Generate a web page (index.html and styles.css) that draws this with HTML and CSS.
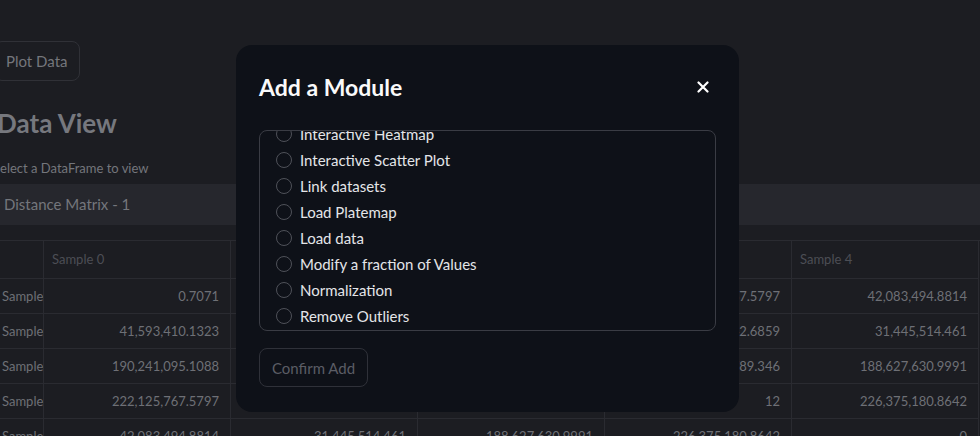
FILE: index.html
```html
<!DOCTYPE html>
<html lang="en">
<head>
    <meta charset="UTF-8">
    <meta name="viewport" content="width=device-width, initial-scale=1.0">
    <title>Data View</title>
    <link rel="stylesheet" href="styles.css">
</head>
<body>
    <div class="page">
        <button class="plot-button">Plot Data</button>
        <h1 class="page-title">Data View</h1>
        <p class="caption">Select a DataFrame to view</p>
        <div class="selectbox">Distance Matrix - 1</div>

        <div class="grid">
            <div class="cell head index"></div>
            <div class="cell head">Sample 0</div>
            <div class="cell head">Sample 1</div>
            <div class="cell head">Sample 2</div>
            <div class="cell head">Sample 3</div>
            <div class="cell head">Sample 4</div>

            <div class="cell index">Sample 0</div>
            <div class="cell num">0.7071</div>
            <div class="cell num">41,593,410.1323</div>
            <div class="cell num">190,241,095.1088</div>
            <div class="cell num">222,125,767.5797</div>
            <div class="cell num">42,083,494.8814</div>

            <div class="cell index">Sample 1</div>
            <div class="cell num">41,593,410.1323</div>
            <div class="cell num">1.4142</div>
            <div class="cell num">148,647,684.9765</div>
            <div class="cell num">180,532,342.6859</div>
            <div class="cell num">31,445,514.461</div>

            <div class="cell index">Sample 2</div>
            <div class="cell num">190,241,095.1088</div>
            <div class="cell num">148,647,684.9765</div>
            <div class="cell num">6</div>
            <div class="cell num">31,884,789.346</div>
            <div class="cell num">188,627,630.9991</div>

            <div class="cell index">Sample 3</div>
            <div class="cell num">222,125,767.5797</div>
            <div class="cell num">180,532,342.6859</div>
            <div class="cell num">31,884,789.346</div>
            <div class="cell num">12</div>
            <div class="cell num">226,375,180.8642</div>

            <div class="cell index">Sample 4</div>
            <div class="cell num">42,083,494.8814</div>
            <div class="cell num">31,445,514.461</div>
            <div class="cell num">188,627,630.9991</div>
            <div class="cell num">226,375,180.8642</div>
            <div class="cell num">0</div>
        </div>
    </div>

    <div class="modal">
        <div class="modal-header">
            <h2 class="modal-title">Add a Module</h2>
            <span class="close">
                <svg width="12" height="12" viewBox="0 0 12 12">
                    <path d="M1.5 1.5 L10.5 10.5 M10.5 1.5 L1.5 10.5" stroke="#ffffff" stroke-width="2.2" stroke-linecap="round"/>
                </svg>
            </span>
        </div>
        <div class="options">
            <div class="option-list">
                <label class="option"><span class="radio"></span>Interactive Heatmap</label>
                <label class="option"><span class="radio"></span>Interactive Scatter Plot</label>
                <label class="option"><span class="radio"></span>Link datasets</label>
                <label class="option"><span class="radio"></span>Load Platemap</label>
                <label class="option"><span class="radio"></span>Load data</label>
                <label class="option"><span class="radio"></span>Modify a fraction of Values</label>
                <label class="option"><span class="radio"></span>Normalization</label>
                <label class="option"><span class="radio"></span>Remove Outliers</label>
            </div>
        </div>
        <button class="confirm">Confirm Add</button>
    </div>
</body>
</html>
```

FILE: styles.css
```css
body {
    margin: 0;
    padding: 0;
    background-color: #1c1d22;
    font-family: Lato, "Noto Sans", sans-serif;
    overflow: hidden;
}

.page {
    margin-left: -7px;
    padding-top: 41px;
    width: 1000px;
}

.plot-button {
    display: block;
    margin-left: 1px;
    height: 40px;
    padding: 0 11px;
    background: transparent;
    border: 1px solid #303137;
    border-radius: 8px;
    color: #74767c;
    font-family: inherit;
    font-size: 15px;
}

.page-title {
    margin: 22px 0 0 4px;
    font-size: 26px;
    font-weight: 700;
    line-height: 40px;
    color: #76787e;
}

.caption {
    margin: 15px 0 0 0;
    font-size: 13px;
    line-height: 20px;
    color: #74767c;
}

.selectbox {
    margin-top: 6px;
    height: 41px;
    line-height: 41px;
    padding-left: 11px;
    background-color: #26272d;
    color: #74767c;
    font-size: 15px;
    border-radius: 8px;
}

.grid {
    margin-top: 15px;
    display: grid;
    grid-template-columns: 51px repeat(5, 187px);
    border-top: 1px solid #2a2b31;
}

.cell {
    height: 34px;
    line-height: 34px;
    padding: 0 11px 0 8px;
    border-right: 1px solid #2a2b31;
    border-bottom: 1px solid #2a2b31;
    font-size: 13px;
    color: #6e7076;
    white-space: nowrap;
    overflow: hidden;
}

.cell.head {
    height: 37px;
    line-height: 37px;
    color: #4c4e55;
}

.cell.index {
    padding: 0 0 0 9px;
}

.cell.num {
    text-align: right;
}

.modal {
    position: fixed;
    left: 236px;
    top: 45px;
    width: 457px;
    padding: 24px 23px 25px 23px;
    background-color: #0e1118;
    border-radius: 16px;
}

.modal-header {
    display: flex;
    align-items: center;
    justify-content: space-between;
}

.modal-title {
    margin: 0;
    font-size: 23px;
    font-weight: 700;
    line-height: 36px;
    color: #fafafa;
}

.close {
    display: flex;
    margin-right: 7px;
}

.options {
    margin-top: 25px;
    height: 199px;
    border: 1px solid #3a3c44;
    border-radius: 8px;
    overflow: hidden;
}

.option-list {
    margin-top: -10px;
}

.option {
    display: flex;
    align-items: center;
    gap: 8px;
    height: 26px;
    padding-left: 16px;
    font-size: 15px;
    color: #e4e5e8;
}

.radio {
    width: 14px;
    height: 14px;
    border: 1px solid #4f5159;
    border-radius: 50%;
}

.confirm {
    display: block;
    margin-top: 17px;
    height: 39px;
    padding: 0 12px;
    background: transparent;
    border: 1px solid #2f3139;
    border-radius: 8px;
    color: #5b5d65;
    font-family: inherit;
    font-size: 15px;
}
```
